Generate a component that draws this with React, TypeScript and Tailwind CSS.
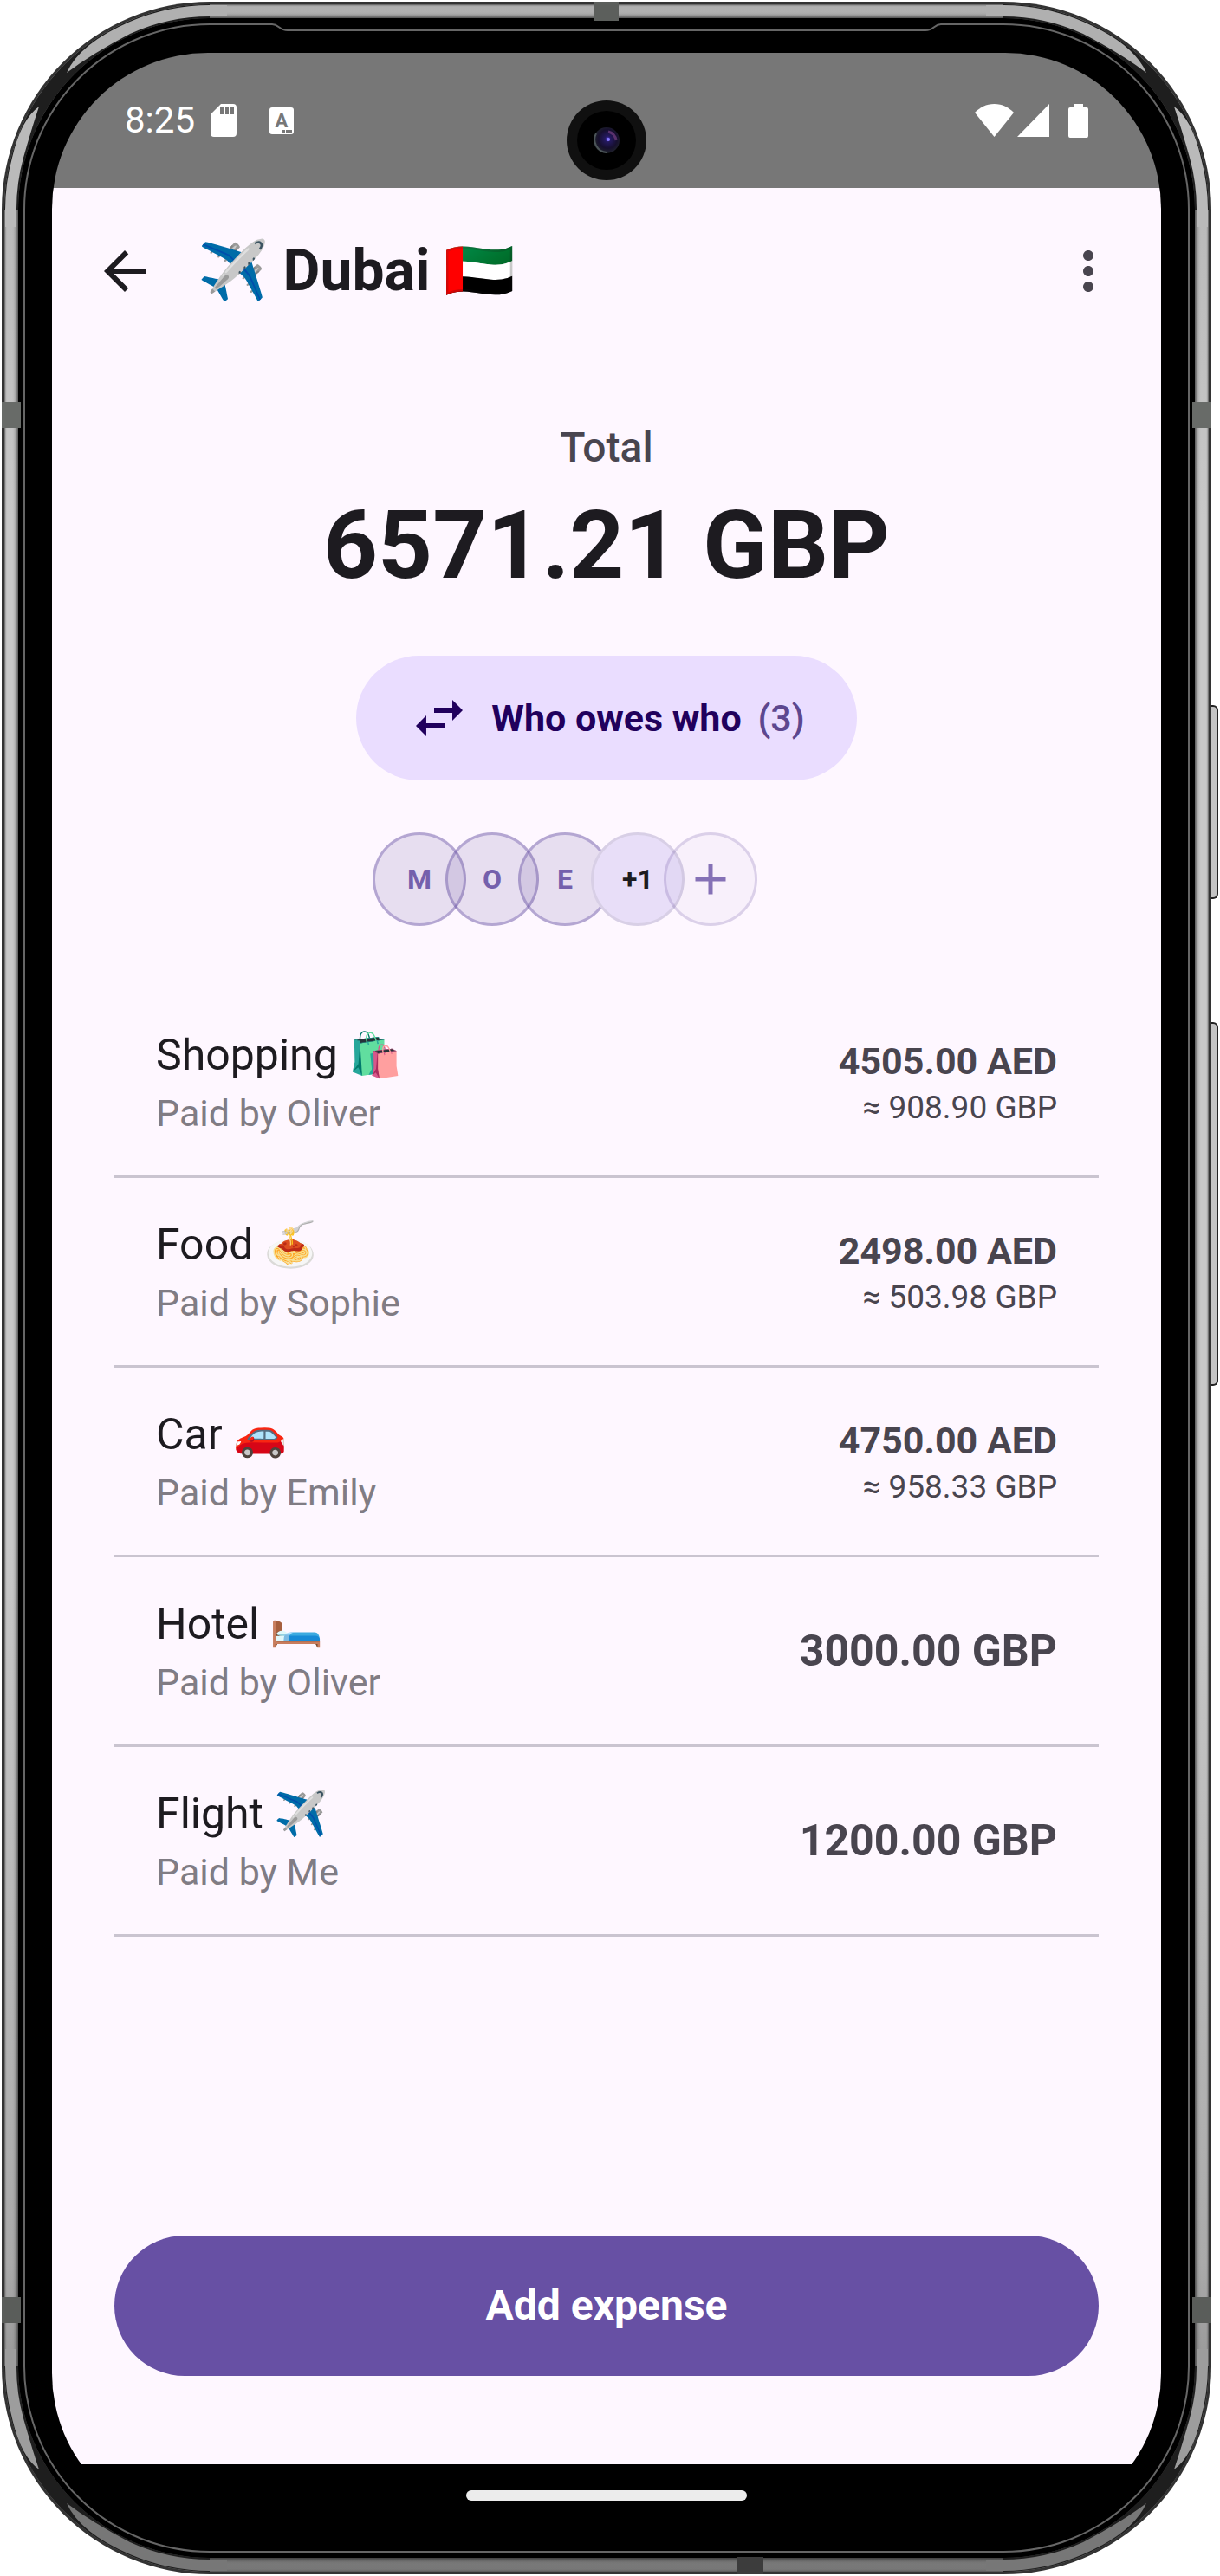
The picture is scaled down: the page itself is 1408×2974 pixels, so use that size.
import { clsx } from "clsx";
import { MdAdd, MdArrowBack, MdMoreVert, MdSwapHoriz } from "react-icons/md";

type Expense = {
  title: string;
  emoji: string;
  paidBy: string;
  amount: string;
  converted?: string;
};

const expenses: Expense[] = [
  { title: "Shopping", emoji: "🛍️", paidBy: "Oliver", amount: "4505.00 AED", converted: "908.90 GBP" },
  { title: "Food", emoji: "🍝", paidBy: "Sophie", amount: "2498.00 AED", converted: "503.98 GBP" },
  { title: "Car", emoji: "🚗", paidBy: "Emily", amount: "4750.00 AED", converted: "958.33 GBP" },
  { title: "Hotel", emoji: "🛏️", paidBy: "Oliver", amount: "3000.00 GBP" },
  { title: "Flight", emoji: "✈️", paidBy: "Me", amount: "1200.00 GBP" },
];

const members = ["M", "O", "E"];

function StatusBar() {
  return (
    <div className="relative flex h-[156px] shrink-0 items-center justify-between bg-[#777777] px-[84px] text-white">
      <div className="flex items-center">
        <span className="text-[42px] leading-none">8:25</span>
        <svg viewBox="0 0 30 38" className="ml-[18px] h-[38px] w-[30px]" fill="currentColor">
          <path
            fillRule="evenodd"
            d="M12 0H26a4 4 0 0 1 4 4V34a4 4 0 0 1-4 4H4a4 4 0 0 1-4-4V12ZM11 4V12H15V4ZM17 4V12H21V4ZM23 4V12H27V4Z"
          />
        </svg>
        <svg viewBox="0 0 28 31" className="ml-[38px] h-[31px] w-7">
          <rect width="28" height="31" rx="3" fill="#fff" />
          <text x="14" y="23" textAnchor="middle" fontSize="22" fontWeight="700" fill="#777">
            A
          </text>
          <path d="M15 26h3v3h-3zM19 26h3v3h-3zM23 26h3v3h-3z" fill="#777" />
        </svg>
      </div>

      <Camera />

      <div className="flex items-center" aria-label="Wi-Fi, signal and battery full" role="img">
        <svg viewBox="0 0 45 38" className="h-[38px] w-[45px]" fill="currentColor">
          <path d="M22.5 38 0 10C6 4 13 0 22.5 0S39 4 45 10Z" />
        </svg>
        <svg viewBox="0 0 37 38" className="ml-1 h-[38px] w-[37px]" fill="currentColor">
          <path d="M37 0V38H0Z" />
        </svg>
        <svg viewBox="0 0 23 39" className="ml-[22px] h-[39px] w-[23px]" fill="currentColor">
          <path d="M7 0h10v4h4a2 2 0 0 1 2 2v31a2 2 0 0 1-2 2H2a2 2 0 0 1-2-2V6a2 2 0 0 1 2-2h5Z" />
        </svg>
      </div>
    </div>
  );
}

function Camera() {
  return (
    <svg viewBox="0 0 92 92" className="absolute top-[55px] left-1/2 h-[92px] w-[92px] -translate-x-1/2" aria-hidden>
      <defs>
        <radialGradient id="lens" cx="0.55" cy="0.45" r="0.55">
          <stop offset="0" stopColor="#5a3fe0" />
          <stop offset="0.2" stopColor="#24195e" />
          <stop offset="0.65" stopColor="#160f2e" />
          <stop offset="1" stopColor="#20242a" />
        </radialGradient>
      </defs>
      <circle cx="46" cy="46" r="46" fill="#101010" />
      <circle cx="46" cy="46" r="34" fill="#000" />
      <circle cx="46" cy="46" r="15" fill="url(#lens)" />
      <path d="M34 38A15 15 0 0 0 46 60" fill="none" stroke="#4b5457" strokeWidth="2" />
      <path d="M48 36A12 12 0 0 1 57 46" fill="none" stroke="#6a3a78" strokeWidth="3" opacity="0.8" />
      <circle cx="48" cy="45" r="2" fill="#8a7bff" />
    </svg>
  );
}

function TopBar() {
  return (
    <header className="flex h-[192px] items-center px-12">
      <button type="button" aria-label="Back" className="text-[#1d1b20]">
        <MdArrowBack size={72} />
      </button>
      <h1 className="ml-12 flex-1 text-[66px] leading-none font-bold text-[#1d1b20]">✈️ Dubai 🇦🇪</h1>
      <button type="button" aria-label="More options" className="text-[#49454f]">
        <MdMoreVert size={72} />
      </button>
    </header>
  );
}

function Summary() {
  return (
    <section className="flex flex-col items-center">
      <p className="mt-[72px] text-[48px] leading-[72px] font-medium text-[#49454f]">Total</p>
      <p className="mt-3 text-[110px] leading-[130px] font-bold text-[#1d1b20]">6571.21 GBP</p>
      <button
        type="button"
        className="mt-[62px] flex h-36 items-center gap-6 rounded-full bg-[#eaddff] px-[60px] text-[43px] font-bold text-[#21005d]"
      >
        <MdSwapHoriz size={72} />
        <span>
          Who owes who <span className="ml-2 font-medium text-[#5d478f]">(3)</span>
        </span>
      </button>
    </section>
  );
}

function Members() {
  return (
    <div className="mt-[60px] flex justify-center pr-24 text-[32px] font-bold">
      {members.map((name, i) => (
        <span
          key={name}
          className={clsx(
            "flex size-[108px] items-center justify-center rounded-full border-3 border-[#6750a4]/40 bg-[#4f378b]/13 text-[#7460ac]",
            i > 0 && "-ml-6",
          )}
        >
          {name}
        </span>
      ))}
      <span className="-ml-6 flex size-[108px] items-center justify-center rounded-full border-3 border-[#d8cfe6] bg-[#e8def8] text-[#1d1b20]">
        +1
      </span>
      <button
        type="button"
        aria-label="Add member"
        className="-ml-6 flex size-[108px] items-center justify-center rounded-full border-3 border-[#6750a4]/20 bg-[#6750a4]/4 text-[#8571b6]"
      >
        <MdAdd size={60} />
      </button>
    </div>
  );
}

function ExpenseRow({ title, emoji, paidBy, amount, converted }: Expense) {
  return (
    <li className="flex h-[219px] items-center justify-between border-b-3 border-[#cac4d0] px-12">
      <div>
        <p className="text-[50px] leading-[72px] text-[#1d1b20]">
          {title} {emoji}
        </p>
        <p className="text-[43px] leading-[62px] text-[#807c84]">Paid by {paidBy}</p>
      </div>
      <div className="text-right text-[#49454f]">
        <p className={clsx("font-bold", converted ? "text-[43px] leading-[60px]" : "text-[50px] leading-[72px]")}>
          {amount}
        </p>
        {converted && <p className="text-[37px] leading-[48px]">≈ {converted}</p>}
      </div>
    </li>
  );
}

// One corner of the metal rim: dark bend with two tapering highlights.
function RimCorner({ className, light, side }: { className: string; light: string; side: string }) {
  return (
    <svg viewBox="0 0 260 260" className={clsx("absolute size-[260px]", className)} aria-hidden>
      <path d="M11 240A229 229 0 0 1 240 11" fill="none" stroke="#1e1e1e" strokeWidth="16" />
      <path
        d="M75 82Q90 48 148 23A236 236 0 0 1 240 4H260V17H240A223 223 0 0 0 148 37Q104 60 75 82Z"
        fill={light}
      />
      <path
        d="M43 121Q22 136 12 180A236 236 0 0 0 4 240V260H17V240A223 223 0 0 1 25 180Q34 148 43 121Z"
        fill={side}
      />
    </svg>
  );
}

function FrameDetails() {
  return (
    <>
      <RimCorner className="top-0 left-0" light="#b0b0b0" side="#bababa" />
      <RimCorner className="top-0 right-0 -scale-x-100" light="#b0b0b0" side="#bababa" />
      <RimCorner className="bottom-0 left-0 -scale-y-100" light="#777777" side="#9d9d9d" />
      <RimCorner className="right-0 bottom-0 -scale-100" light="#777777" side="#9d9d9d" />

      {/* antenna bands */}
      <div className="absolute top-0 left-1/2 h-[22px] w-7 -translate-x-1/2 bg-[#5c5f5c]" />
      <div className="absolute right-[517px] bottom-0 h-5 w-[30px] bg-[#3c3c3c]" />
      <div className="absolute top-[462px] left-0 h-[30px] w-[22px] bg-[#686b68]" />
      <div className="absolute top-[462px] right-0 h-[30px] w-[22px] bg-[#686b68]" />
      <div className="absolute bottom-[290px] left-0 h-[30px] w-[22px] bg-[#5a5d5a]" />
      <div className="absolute right-0 bottom-[290px] h-[30px] w-[22px] bg-[#5a5d5a]" />

      {/* power and volume keys */}
      <div className="absolute top-[812px] -right-2 h-[224px] w-2 rounded-r-md border-2 border-l-0 border-[#222] bg-[#c4c4c4]" />
      <div className="absolute top-[1178px] -right-2 h-[420px] w-2 rounded-r-md border-2 border-l-0 border-[#222] bg-[#c4c4c4]" />

      {/* earpiece slot */}
      <div className="absolute inset-x-[312px] top-[24px] flex">
        <svg viewBox="0 0 18 10" className="h-2.5 w-[18px] bg-black" fill="none" stroke="#666" strokeWidth="2">
          <path d="M0 2C8 2 8 9 18 9" />
        </svg>
        <div className="h-2.5 flex-1 border-b-2 border-[#666] bg-black" />
        <svg viewBox="0 0 18 10" className="h-2.5 w-[18px] bg-black" fill="none" stroke="#666" strokeWidth="2">
          <path d="M18 2C10 2 10 9 0 9" />
        </svg>
      </div>
    </>
  );
}

export default function App() {
  return (
    <div className="flex min-h-screen bg-white py-0.5 pr-2.5 pl-0.5 font-[Roboto,'Noto_Color_Emoji',sans-serif]">
      <div className="relative flex flex-1 rounded-[240px] bg-[#333] p-[3px]">
        <div className="flex flex-1 rounded-[237px] bg-[linear-gradient(#b0b0b0,#c8c8c8_20%,#c8c8c8_60%,#aaaaaa_88%,#777777)] p-4 shadow-[inset_0_0_2px_1px_#555]">
          <div className="flex flex-1 rounded-[221px] bg-black p-[6px] shadow-[0_0_5px_1px_#222]">
            <div className="flex flex-1 rounded-[215px] border-2 border-[#666] bg-black px-[31px] pt-8 pb-[25px]">
              <main className="flex flex-1 flex-col overflow-hidden rounded-[180px] bg-black">
                <StatusBar />
                <div className="flex flex-1 flex-col bg-[#fef7ff]">
                  <TopBar />
                  <Summary />
                  <Members />
                  <ul className="mx-[72px] mt-[72px]">
                    {expenses.map((expense) => (
                      <ExpenseRow key={expense.title} {...expense} />
                    ))}
                  </ul>
                  <div className="mt-auto px-[72px] pt-12 pb-[102px]">
                    <button
                      type="button"
                      className="h-[162px] w-full rounded-full bg-[#6750a4] text-[48px] font-bold text-white"
                    >
                      Add expense
                    </button>
                  </div>
                </div>
                <div className="flex h-[75px] shrink-0 justify-center pt-[30px]">
                  <div className="h-3 w-[324px] rounded-full bg-[#ececec]" />
                </div>
              </main>
            </div>
          </div>
        </div>
        <FrameDetails />
      </div>
    </div>
  );
}
